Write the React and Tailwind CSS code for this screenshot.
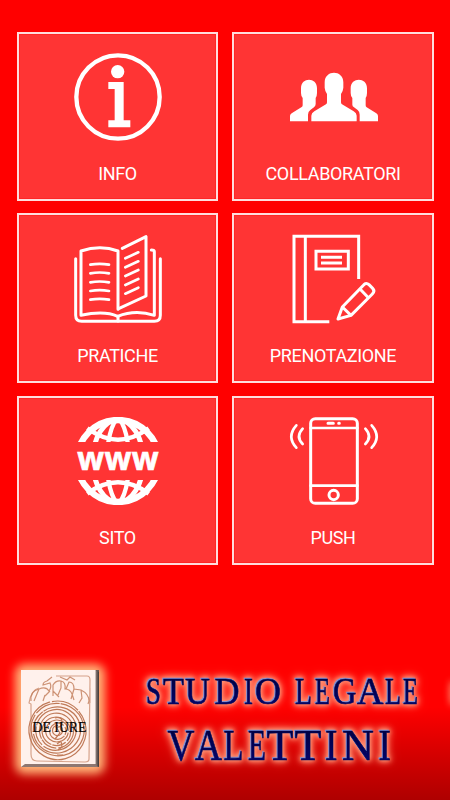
const iconClass = 'w-[88px] h-[88px] shrink-0 overflow-visible';

function InfoIcon() {
  return (
    <svg viewBox="0 0 264 264" className={iconClass} fill="#fff">
      <circle cx="132" cy="132" r="125" fill="none" stroke="#fff" strokeWidth="13" />
      <circle cx="131" cy="56" r="20" />
      <path d="M103 87h46v115h20v21h-66v-21h19v-94h-19z" />
    </svg>
  );
}

function PeopleIcon() {
  return (
    <svg viewBox="0 0 264 264" className={iconClass} fill="#fff">
      <path d="M64 205v-17q0-8 9-13l35-21q3-2 3-6V123q-6-8-7-19V88c0-38 56-38 56 0v16q-1 11-7 19v25q0 4 3 6l35 21q9 5 9 13v17z" />
      <path d="M0 205v-16q0-5 5-8l29-18q4-2 4-6v-22q-5-6-5-15v-14c0-34 48-34 48 0v14q0 9-4 15v18q0 6-5 10l-11 8q-7 5-7 14v20z" />
      <path d="M264 205v-16q0-5-5-8l-29-18q-3-2-3-6v-22q4-6 4-15v-14c0-34-49-34-49 0v14q0 9 5 15v20q0 5 5 8l11 8q6 5 6 14v20z" />
    </svg>
  );
}

function BookIcon() {
  return (
    <svg viewBox="0 0 264 264" className={iconClass} fill="none" stroke="#fff" strokeWidth="9" strokeLinecap="round" strokeLinejoin="round">
      <path d="M5 71v170q0 18 18 18h218q18 0 18-18V71" />
      <path d="M132 223V48Q79 28 21 48v193Q91 226 131 244Q184 223 241 241V50q0-5-9-5" />
      <path d="M145 40l71-35v178l-82 38M132 244v14" />
      <g strokeWidth="8">
        <path d="M49 89q28-5 56 0M49 115q28-5 56 0M49 142q28-5 56 0M49 168q28-5 56 0M49 194q28-5 56 0" />
        <path d="M154 70l39-18M154 97l39-18M154 123l39-18M154 150l39-18M154 176l39-18" />
      </g>
    </svg>
  );
}

function NotebookIcon() {
  return (
    <svg viewBox="0 0 264 264" className={iconClass} fill="none" stroke="#fff" strokeWidth="9">
      <path d="M118 260H12V4h194v128" />
      <path d="M46 4v256M78 49h97v53H78zM93 67h63M93 84h63" />
      <path d="M144 252l13-36 64-66q7-9 16-1l11 11q8 8-1 17l-64 64z" strokeLinejoin="round" />
      <path d="M157 216l26 25M210 162l26 27" />
    </svg>
  );
}

function GlobeIcon() {
  return (
    <svg viewBox="0 0 264 264" className={iconClass}>
      <defs>
        <clipPath id="globe-caps">
          <path d="M0 0h264v75H0zM0 189h264v75H0z" />
        </clipPath>
      </defs>
      <g clipPath="url(#globe-caps)" fill="none" stroke="#fff" strokeWidth="13">
        <circle cx="132" cy="132" r="123" strokeWidth="19" />
        <ellipse cx="132" cy="132" rx="76" ry="124" strokeWidth="15" />
        <path d="M130 4Q111 25 103 76M134 4Q153 25 161 76M130 260Q111 239 103 188M134 260Q153 239 161 188" />
        <path d="M40 34Q132 102 224 34M40 230Q132 162 224 230" />
      </g>
      <text transform="translate(10 159) scale(0.96 1)" textLength="254" fill="#fff" stroke="#fff" strokeWidth="2" fontFamily="Open Sans, sans-serif" fontSize="98" fontWeight="700">
        www
      </text>
    </svg>
  );
}

function PhoneIcon() {
  return (
    <svg viewBox="0 0 264 264" className={iconClass} fill="none" stroke="#fff" strokeWidth="9" strokeLinecap="round">
      <rect x="62" y="5" width="140" height="254" rx="14" />
      <path d="M62 33h140M62 206h140" strokeWidth="8" />
      <path d="M114 19h16M146 19h2" />
      <circle cx="131" cy="234" r="14" />
      <path d="M38 35q-22 24 0 46M19 25q-30 34 0 67M226 35q22 24 0 46M245 25q30 34 0 67" strokeWidth="8" />
    </svg>
  );
}

const tiles = [
  { label: 'INFO', Icon: InfoIcon },
  { label: 'COLLABORATORI', Icon: PeopleIcon },
  { label: 'PRATICHE', Icon: BookIcon },
  { label: 'PRENOTAZIONE', Icon: NotebookIcon },
  { label: 'SITO', Icon: GlobeIcon },
  { label: 'PUSH', Icon: PhoneIcon },
];

// Radii of the engraved labyrinth rings on the plaque
const rings = [5, 8, 11, 14, 17, 20, 23, 26, 28.5];

// Each letter of the firm name: [char, x, width]
const words = [
  { y: 64, size: 37, letters: [['S', 146, 15], ['T', 163, 21], ['U', 185, 25], ['D', 214.5, 25], ['I', 244, 9], ['O', 255, 26]] },
  { y: 64, size: 37, letters: [['L', 295, 17], ['E', 315, 15], ['G', 333, 23.5], ['A', 357, 26.5], ['L', 385, 16], ['E', 403, 15]] },
  { y: 120, size: 45, letters: [['V', 167.5, 27], ['A', 195, 27], ['L', 223.5, 20], ['E', 248, 18], ['T', 266.5, 27], ['T', 294.5, 27], ['I', 325, 12.5], ['N', 342, 32], ['I', 378.5, 12.5]] },
];

function FirmName() {
  return words.map(({ y, size, letters }) => (
    <text key={letters[0][1]} y={y} fontSize={size}>
      {letters.map(([char, x, width]) => (
        <tspan key={x} x={x} textLength={width} lengthAdjust="spacingAndGlyphs">{char}</tspan>
      ))}
    </text>
  ));
}

function Banner() {
  return (
    <svg viewBox="0 0 450 160" className="block w-[450px] h-[160px]">
      <defs>
        <filter id="glow" x="-30%" y="-30%" width="160%" height="160%">
          <feGaussianBlur stdDeviation="5" />
        </filter>
        <filter id="soft" x="-200%" y="-100%" width="500%" height="300%">
          <feGaussianBlur stdDeviation="3" />
        </filter>
        <linearGradient id="ink" x1="0" y1="0" x2="0" y2="1">
          <stop offset="0" stopColor="#000036" />
          <stop offset="1" stopColor="#050575" />
        </linearGradient>
        <linearGradient id="edge" x1="0" y1="0" x2="1" y2="0">
          <stop offset="0" stopColor="#a08f8a" />
          <stop offset="1" stopColor="#3f3634" />
        </linearGradient>
      </defs>

      {/* Plaque */}
      <rect x="15" y="24" width="90" height="110" rx="9" fill="#ffb478" filter="url(#glow)" />
      <path d="M21 30h78v97H21z" fill="#6b5854" />
      <path d="M95 124V30l4 2v95z" fill="url(#edge)" />
      <path d="M21 127l4-3.500h70l3 3.500z" fill="#8e7771" />
      <path d="M21 30h74.500v94H25l-4 3z" fill="#fff1ec" />
      <g fill="none" stroke="#c07a58" strokeWidth="1.200">
        <path d="M56 36h31q3 0 3 4l-1 79q0 3-4 3l-48-1q-6 0-6-7V64l-2-1q2-13 10-15M90 48v15" strokeOpacity="0.65" />
        <path d="M31 61q-1-10 8-12 7-3 10 2 3-4 1-8l-7 2q0-3 4-4l5-4M39 49l-5 12M45 55l-2 6M50 51l-5 5M53 56V45q3-5 8-4 5 1 4 8 5 0 7 5l2 6M61 41v7l-3 7M66 49l3-7q5 0 5 7l7 1q8 4 8 11l-1 3M74 49l-3 10M81 50l1 8-3 5M60 37l7 3 3-3 5 3M53 51l6 6" strokeOpacity="0.8" />
        {rings.map((r, i) => (
          <ellipse key={r} cx={57.5 + (i % 2) * 0.6} cy={90.5} rx={r} ry={r * 1.03} strokeDasharray={`${r * 4.8} 2 ${r} 1`} transform={`rotate(${i * 43} 57 90.5)`} />
        ))}
        <path d="M55 78q7-2 7 4t-6 5l4 6-5 6M57 104l4-3 1 6-4 3M57 115h6" />
      </g>
      <text x="32.500" y="92.300" textLength="54" lengthAdjust="spacingAndGlyphs" fill="#000" stroke="#000" strokeWidth="0.200" fontFamily="Liberation Serif, serif" fontSize="15">
        DE IURE
      </text>

      {/* Firm name: bevelled light edge on the left, warm glow around */}
      <g
        fontFamily="Liberation Serif, serif"
        fill="url(#ink)"
        stroke="#080858"
        strokeWidth="0.600"
        className="filter-[drop-shadow(-1px_-0.5px_0_#7c90d8)_drop-shadow(0_0_2px_#ffa080)_drop-shadow(0_0_3px_#ff9070)_drop-shadow(0_0_4px_#ff806080)]"
      >
        <FirmName />
      </g>
      <ellipse cx="452" cy="53" rx="3" ry="13" fill="#ff8060" filter="url(#soft)" />
    </svg>
  );
}

export default function App() {
  return (
    <main className="flex flex-col justify-between w-[450px] h-[800px] overflow-hidden bg-[#ff0000] font-['Roboto',sans-serif]">
      <div className="grid grid-cols-[201px_202px] grid-rows-[169px_170px_169px] content-between h-[564.8px] gap-x-[14px] pt-8 pl-[17px]">
        {tiles.map(({ label, Icon }) => (
          <button
            key={label}
            type="button"
            className="flex flex-col items-center pt-[19.3px] border-2 border-[#ffdcdc] bg-[#ff3434] text-white inset-shadow-[0_0_0_1px_#ff2626] even:[&>svg]:ml-0.5"
          >
            <Icon />
            <span className="mt-[22px] text-[18px] leading-[21px] tracking-[-0.35px]">{label}</span>
          </button>
        ))}
      </div>
      <footer className="h-[160px] bg-linear-to-b from-[#ff0000] from-42% to-[#ae0000]">
        <Banner />
      </footer>
    </main>
  );
}
